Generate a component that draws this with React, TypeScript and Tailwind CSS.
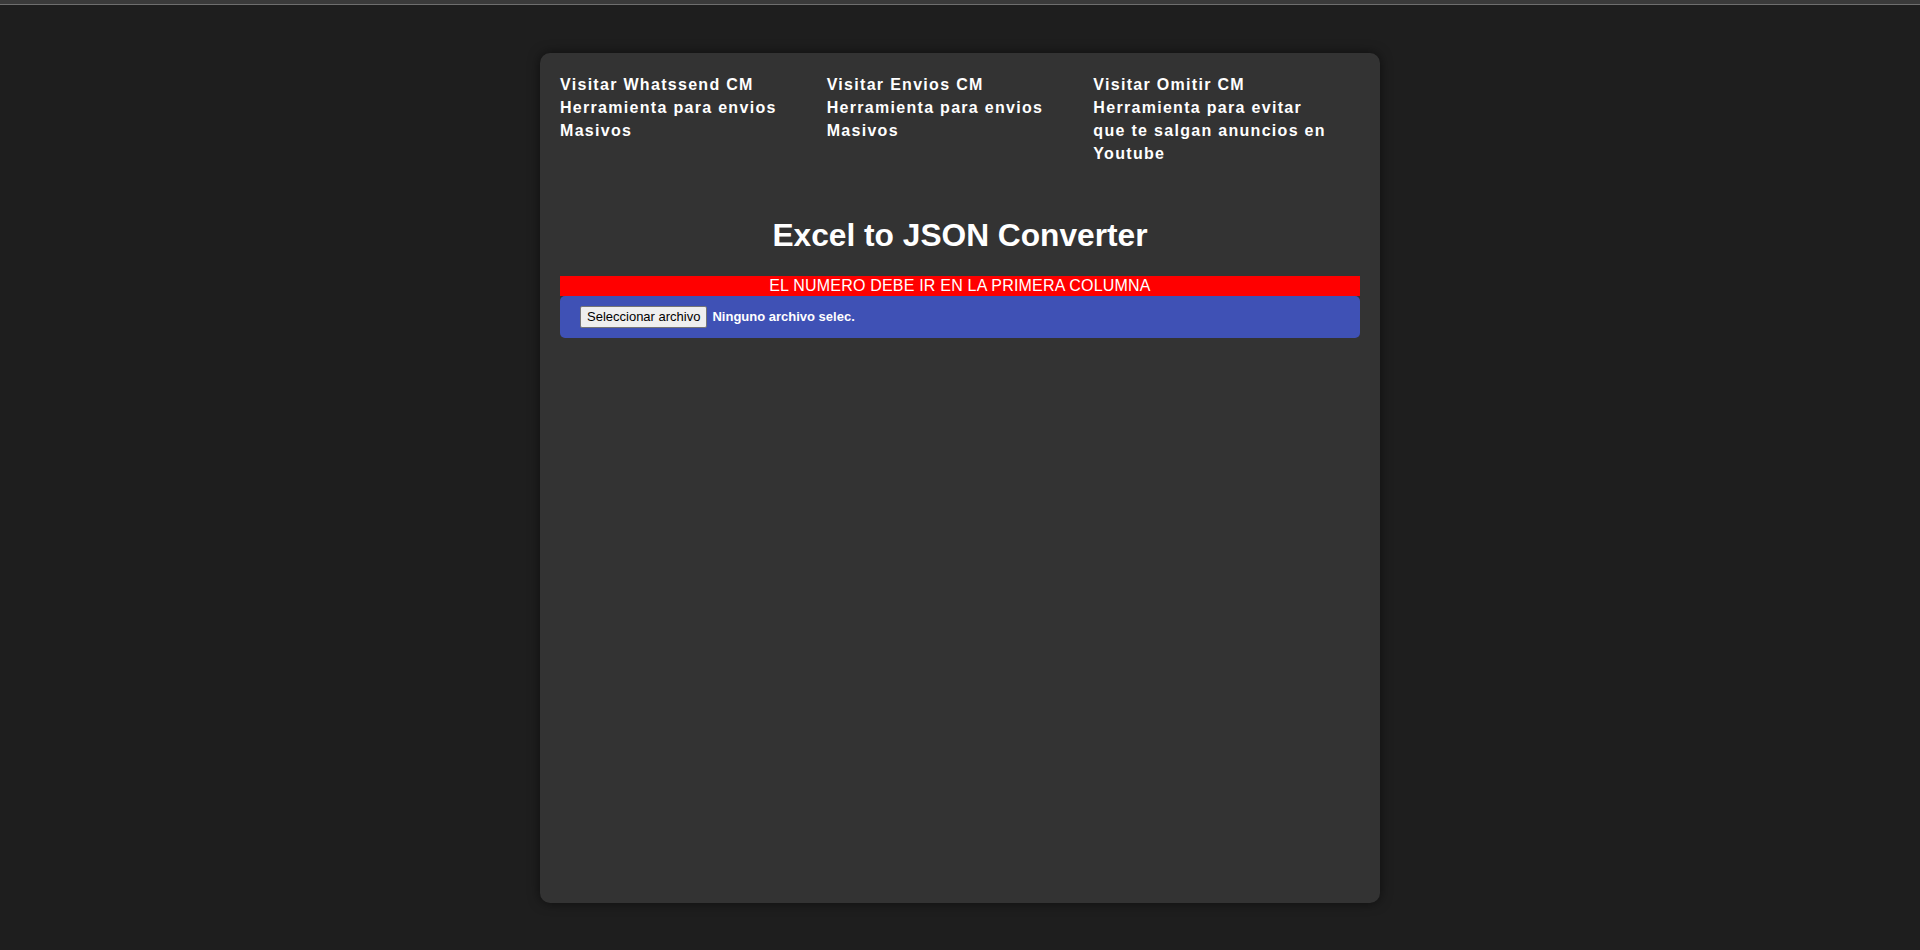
// Página do conversor Excel → JSON
const links = [
  { title: 'Visitar Whatssend CM', desc: 'Herramienta para envios Masivos' },
  { title: 'Visitar Envios CM', desc: 'Herramienta para envios Masivos' },
  { title: 'Visitar Omitir CM', desc: 'Herramienta para evitar que te salgan anuncios en Youtube' },
]

export default function App() {
  return (
    <div className="min-h-[950px] bg-[#1e1e1e] font-['Liberation_Sans',Arial,sans-serif] text-white">
      {/* barra superior */}
      <div className="h-[5px] border-b border-[#6e6e6e] bg-[#3a3a3a]" />

      <div className="mx-auto mt-[48px] h-[850px] w-[840px] rounded-[10px] bg-[#333333] p-[20px] shadow-[0_0_12px_rgba(0,0,0,0.55)]">
        {/* Links para as outras ferramentas */}
        <div className="grid grid-cols-3">
          {links.map((l) => (
            <div key={l.title} className="pr-[30px] text-[16px] font-bold leading-[23px] tracking-[1.3px]">
              <a href="#" className="block">
                {l.title}
              </a>
              <p>{l.desc}</p>
            </div>
          ))}
        </div>

        <h1 className="mt-[52px] text-center text-[31.7px] font-bold leading-[36px]">Excel to JSON Converter</h1>

        <div className="mt-[23px] h-[20px] bg-[#ff0000] text-center text-[16px] leading-[20px] tracking-[0.2px]">
          EL NUMERO DEBE IR EN LA PRIMERA COLUMNA
        </div>

        <div className="flex items-center gap-[5px] rounded-[5px] bg-[#3f51b5] px-[20px] py-[10px]">
          <button className="h-[22px] rounded-[2px] border border-[#767676] bg-[#efefef] px-[6px] text-[13px] leading-[20px] text-black">
            Seleccionar archivo
          </button>
          <span className="text-[13px] font-bold">Ninguno archivo selec.</span>
        </div>
      </div>
    </div>
  )
}
